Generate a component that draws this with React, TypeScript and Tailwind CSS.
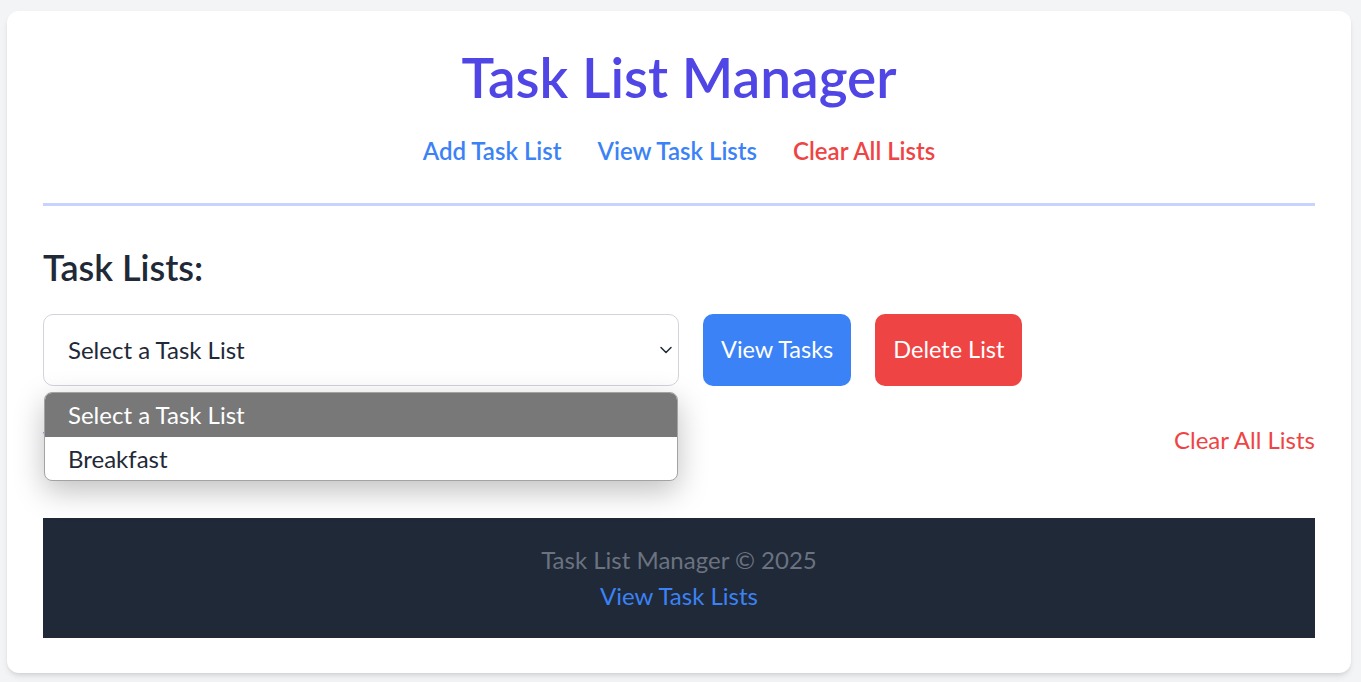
import { ChevronDown } from 'lucide-react'

export default function App() {
  const options = ['Select a Task List', 'Breakfast']

  return (
    <div className="min-h-screen bg-[#f3f4f6] pl-[7px] pr-[10px] pt-[11px] pb-2 font-['Lato','Liberation_Sans',sans-serif]">
      <div className="bg-white rounded-xl shadow-md px-9 pt-[38px] pb-[35px]">
        {/* Header */}
        <header className="text-center border-b-[3px] border-[#c7d2fe] pb-[40px]">
          <h1 className="text-[55px] leading-none font-semibold text-[#4f46e5] pt-px">Task List Manager</h1>
          <nav className="mt-[34px] flex justify-center gap-9 text-[24px] leading-none font-semibold">
            <a href="#" className="text-[#3b82f6]">Add Task List</a>
            <a href="#" className="text-[#3b82f6]">View Task Lists</a>
            <a href="#" className="text-[#ef4444]">Clear All Lists</a>
          </nav>
        </header>

        {/* Task lists */}
        <main>
          <h2 className="mt-[43px] text-[36px] leading-none font-semibold text-[#1f2937]">Task Lists:</h2>

          <div className="mt-[29px] flex items-center gap-6">
            <div className="relative w-[636px]">
              <select className="w-full h-[72px] appearance-none rounded-[10px] border border-[#d1d5db] bg-white pl-6 pr-10 text-[24px] text-[#1f2937] outline-none">
                {options.map((o) => (
                  <option key={o}>{o}</option>
                ))}
              </select>
              <ChevronDown className="pointer-events-none absolute right-[3px] top-1/2 -translate-y-1/2 w-5 h-5 text-[#1f2937]" strokeWidth={1.8} />

              {/* open dropdown */}
              <div className="absolute left-px top-[78px] w-[634px] z-10 rounded-lg border border-[#a3a3a3] bg-white overflow-hidden shadow-[0_10px_30px_rgba(0,0,0,0.25)]">
                <div className="h-[44px] flex items-center pl-[23px] bg-[#787878] text-white text-[24px]">Select a Task List</div>
                <div className="h-[43px] flex items-center pl-[23px] text-[#1f2937] text-[24px]">Breakfast</div>
              </div>
            </div>
            <button className="h-[72px] px-[18px] rounded-[10px] bg-[#3b82f6] text-white text-[23.5px]">View Tasks</button>
            <button className="h-[72px] px-[18px] rounded-[10px] bg-[#ef4444] text-white text-[23.5px]">Delete List</button>
          </div>

          <div className="mt-[42px] flex justify-between text-[24px] leading-none">
            <a href="#" className="text-[#3b82f6]">View Task Lists</a>
            <a href="#" className="text-[#ef4444]">Clear All Lists</a>
          </div>
        </main>

        {/* Footer */}
        <footer className="mt-[66px] h-[120px] bg-[#1f2937] flex flex-col items-center justify-center text-[24px] leading-[36px]">
          <p className="text-[#6b7280]">Task List Manager © 2025</p>
          <a href="#" className="text-[#3b82f6]">View Task Lists</a>
        </footer>
      </div>
    </div>
  )
}
